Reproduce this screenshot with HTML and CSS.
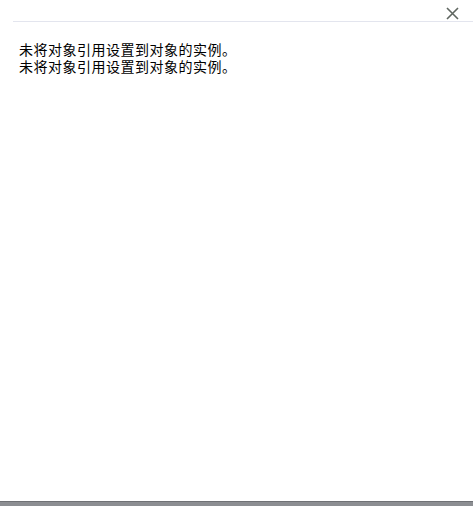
FILE: index.html
```html
<!DOCTYPE html>
<html lang="zh-CN">
<head>
<meta charset="utf-8">
<link rel="stylesheet" href="styles.css">
</head>
<body>
<div class="screen">
  <div class="dialog">
    <div class="header">
      <div class="header-rule">
        <button class="close" aria-label="关闭">
          <svg width="13" height="13" viewBox="0 0 13 13"><path d="M1 1L12 12M12 1L1 12" stroke="#5f6660" stroke-width="1.6" fill="none"/></svg>
        </button>
      </div>
    </div>
    <div class="body">
      <p class="msg">未将对象引用设置到对象的实例。<br>未将对象引用设置到对象的实例。</p>
    </div>
  </div>
  <div class="taskbar"></div>
</div>
</body>
</html>
```
FILE: styles.css
```css
html, body {
  margin: 0;
  padding: 0;
  background: #ffffff;
}
.screen {
  width: 473px;
  height: 506px;
  display: flex;
  flex-direction: column;
  overflow: hidden;
}
.dialog {
  flex: 1;
  display: flex;
  flex-direction: column;
  background: #ffffff;
  border-radius: 0 0 6px 6px;
}
.header {
  height: 22px;
  padding-left: 13px;
  display: flex;
  flex-direction: column;
}
.header-rule {
  flex: 1;
  border-bottom: 1px solid #e3e5ee;
  display: flex;
  justify-content: flex-end;
  align-items: flex-start;
  padding-right: 14px;
  padding-top: 7px;
}
.close {
  border: none;
  background: transparent;
  padding: 0;
  margin: 0;
  width: 13px;
  height: 13px;
  display: block;
  cursor: pointer;
}
.close svg { display: block; }
.body {
  padding: 19px 0 0 19px;
  font-family: "Noto Sans CJK SC", "Noto Sans", sans-serif;
  font-size: 14px;
  line-height: 17px;
  letter-spacing: 0.5px;
  color: #000000;
}
.msg {
  margin: 0;
  white-space: nowrap;
}
.taskbar {
  height: 4px;
  background: #8c8e92;
  border-top: 1px solid #6f7175;
}
```
